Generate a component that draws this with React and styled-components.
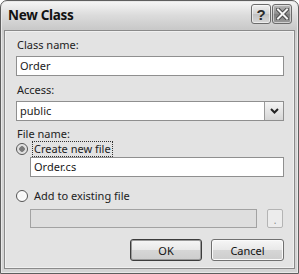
import React from 'react';
import styled, { createGlobalStyle } from 'styled-components';

const GlobalStyle = createGlobalStyle`
  html, body {
    margin: 0;
    padding: 0;
    background: #ffffff;
  }
  body {
    font-family: "Noto Sans", "DejaVu Sans", sans-serif;
  }
`;

const App = () => {
    return (
        <>
            <GlobalStyle />
            <Window>
                <TitleBar>
                    <Title>New Class</Title>
                    <TitleButtons>
                        <CaptionButton>?</CaptionButton>
                        <CaptionButton $close>
                            <svg width="13" height="12" viewBox="0 0 13 12">
                                <path d="M2 1.5 L11 10.5 M11 1.5 L2 10.5" stroke="#4a4a4a" strokeWidth="4" strokeLinecap="square" />
                                <path d="M2 1.5 L11 10.5 M11 1.5 L2 10.5" stroke="#f4f4f4" strokeWidth="2" strokeLinecap="square" />
                            </svg>
                        </CaptionButton>
                    </TitleButtons>
                </TitleBar>
                <Client>
                    <Label>Class name:</Label>
                    <TextBox $gap={3}>Order</TextBox>
                    <Label $top={6}>Access:</Label>
                    <Select>
                        <span>public</span>
                        <DropButton>
                            <svg width="9" height="6" viewBox="0 0 9 6">
                                <path d="M1 1 L4.5 4.5 L8 1" stroke="#222" strokeWidth="2" fill="none" />
                            </svg>
                        </DropButton>
                    </Select>
                    <Label $top={5}>File name:</Label>
                    <RadioRow>
                        <Radio $checked />
                        <FocusText>Create new file</FocusText>
                    </RadioRow>
                    <TextBox $indent $gap={1}>Order.cs</TextBox>
                    <RadioRow $top={12}>
                        <Radio />
                        <RadioText>Add to existing file</RadioText>
                    </RadioRow>
                    <BrowseRow>
                        <DisabledBox />
                        <SmallButton>.</SmallButton>
                    </BrowseRow>
                    <Buttons>
                        <PushButton $default>OK</PushButton>
                        <PushButton $w={73}>Cancel</PushButton>
                    </Buttons>
                </Client>
            </Window>
        </>
    );
};

const Window = styled.div`
  box-sizing: border-box;
  width: 299px;
  height: 274px;
  border: 1px solid #5e5e5e;
  border-radius: 7px 7px 0 0;
  background: linear-gradient(to bottom, #f6f6f6 0px, #dcdcdc 14px, #c9c9c9 28px, #d2d2d2 40px, #d4d4d4 100%);
  box-shadow: inset 0 0 0 1px #e8e8e8;
  display: flex;
  flex-direction: column;
  padding: 0 3px 4px 3px;
`;

const TitleBar = styled.div`
  height: 29px;
  display: flex;
  align-items: center;
  justify-content: space-between;
  padding: 0 3px 0 4px;
`;

const Title = styled.div`
  font-family: "Noto Sans", sans-serif;
  font-weight: 700;
  font-size: 13.5px;
  color: #111;
  letter-spacing: -0.3px;
  margin-top: -1px;
`;

const TitleButtons = styled.div`
  display: flex;
  gap: 1px;
  margin-top: -3px;
`;

const CaptionButton = styled.div`
  box-sizing: border-box;
  width: 20px;
  height: 20px;
  border: 1px solid #6b6b6b;
  border-radius: 3px;
  display: flex;
  align-items: center;
  justify-content: center;
  font-family: "Liberation Sans", sans-serif;
  font-weight: 700;
  font-size: 15px;
  color: #2a2a2a;
  background: ${p => p.$close
        ? 'linear-gradient(to bottom, #b8b8b8, #8e8e8e 50%, #7e7e7e 51%, #9a9a9a)'
        : 'linear-gradient(to bottom, #f0f0f0, #d2d2d2 50%, #c2c2c2 51%, #d8d8d8)'};
  box-shadow: inset 0 0 0 1px rgba(255, 255, 255, 0.55);
`;

const Client = styled.div`
  flex: 1;
  box-sizing: border-box;
  border: 1px solid #8a8a8a;
  background: #e3e3e3;
  box-shadow: inset 0 0 0 1px #f0f0f0;
  display: flex;
  flex-direction: column;
  padding: 6px 10px 0 11px;
`;

const Label = styled.div`
  font-size: 11px;
  line-height: 16px;
  color: #222;
  padding-left: 1px;
  margin-top: ${p => p.$top || 0}px;
`;

const TextBox = styled.div`
  box-sizing: border-box;
  height: 20px;
  margin-top: ${p => p.$gap || 0}px;
  margin-left: ${p => (p.$indent ? 14 : 0)}px;
  border: 1px solid #8f8f8f;
  background: #ffffff;
  font-size: 11px;
  line-height: 18px;
  padding-left: 3px;
  color: #1a1a1a;
`;

const Select = styled(TextBox)`
  margin-top: 3px;
  display: flex;
  justify-content: space-between;
  padding-right: 0;
`;

const DropButton = styled.div`
  box-sizing: border-box;
  width: 19px;
  height: 18px;
  border-left: 1px solid #9a9a9a;
  background: linear-gradient(to bottom, #f4f4f4, #d6d6d6);
  display: flex;
  align-items: center;
  justify-content: center;
`;

const RadioRow = styled.div`
  display: flex;
  align-items: center;
  height: 14px;
  margin-top: ${p => p.$top || 0}px;
`;

const Radio = styled.div`
  box-sizing: border-box;
  width: 12px;
  height: 12px;
  border-radius: 50%;
  border: 1px solid #555;
  background: radial-gradient(circle, ${p => (p.$checked ? '#7a7a7a 0 2.5px, #d8d8d8 3px' : '#f4f4f4 0')}, #ffffff 100%);
  margin-right: 5px;
  flex: none;
`;

const RadioText = styled.span`
  font-size: 11px;
  line-height: 14px;
  color: #222;
  padding: 0 1px;
`;

const FocusText = styled(RadioText)`
  outline: 1px dotted #333;
  outline-offset: 0;
`;

const BrowseRow = styled.div`
  display: flex;
  align-items: stretch;
  gap: 10px;
  margin: 6px 1px 0 14px;
  height: 19px;
`;

const DisabledBox = styled.div`
  flex: 1;
  border: 1px solid #a2a2a2;
  background: #dedede;
`;

const SmallButton = styled.div`
  box-sizing: border-box;
  width: 16px;
  border: 1px solid #b4b4b4;
  border-radius: 2px;
  background: #ececec;
  color: #888;
  font-size: 10px;
  display: flex;
  justify-content: center;
  align-items: flex-end;
  line-height: 14px;
`;

const Buttons = styled.div`
  display: flex;
  justify-content: flex-end;
  gap: 9px;
  margin-top: 11px;
`;

const PushButton = styled.div`
  box-sizing: border-box;
  width: ${p => p.$w || 72}px;
  height: 22px;
  border: 1px solid ${p => (p.$default ? '#3c3c3c' : '#707070')};
  border-radius: 3px;
  background: linear-gradient(to bottom, #f6f6f6, #e8e8e8 50%, #d6d6d6 51%, #cdcdcd);
  box-shadow: inset 0 0 0 1px ${p => (p.$default ? '#9a9a9a' : '#fafafa')};
  display: flex;
  align-items: center;
  justify-content: center;
  font-size: 11px;
  color: #111;
`;

export default App;
